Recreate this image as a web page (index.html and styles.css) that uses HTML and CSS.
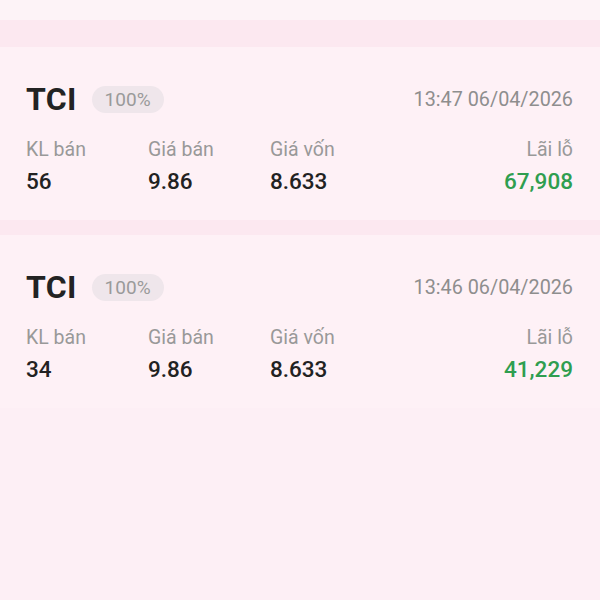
FILE: index.html
```html
<!DOCTYPE html>
<html lang="vi">
<head>
    <meta charset="UTF-8">
    <meta name="viewport" content="width=device-width, initial-scale=1.0">
    <title>Lịch sử bán</title>
    <link rel="stylesheet" href="styles.css">
</head>
<body>
    <div class="top-strip"></div>
    <div class="order-list">
        <div class="order-card">
            <div class="order-head">
                <span class="symbol">TCI</span>
                <span class="ratio">100%</span>
                <span class="time">13:47 06/04/2026</span>
            </div>
            <div class="order-stats">
                <div class="stat">
                    <span class="label">KL bán</span>
                    <span class="value">56</span>
                </div>
                <div class="stat">
                    <span class="label">Giá bán</span>
                    <span class="value">9.86</span>
                </div>
                <div class="stat">
                    <span class="label">Giá vốn</span>
                    <span class="value">8.633</span>
                </div>
                <div class="stat stat-right">
                    <span class="label">Lãi lỗ</span>
                    <span class="value profit">67,908</span>
                </div>
            </div>
        </div>
        <div class="order-card">
            <div class="order-head">
                <span class="symbol">TCI</span>
                <span class="ratio">100%</span>
                <span class="time">13:46 06/04/2026</span>
            </div>
            <div class="order-stats">
                <div class="stat">
                    <span class="label">KL bán</span>
                    <span class="value">34</span>
                </div>
                <div class="stat">
                    <span class="label">Giá bán</span>
                    <span class="value">9.86</span>
                </div>
                <div class="stat">
                    <span class="label">Giá vốn</span>
                    <span class="value">8.633</span>
                </div>
                <div class="stat stat-right">
                    <span class="label">Lãi lỗ</span>
                    <span class="value profit">41,229</span>
                </div>
            </div>
        </div>
    </div>
</body>
</html>
```

FILE: styles.css
```css
body {
    font-family: Roboto, 'Noto Sans', sans-serif;
    background: #fdeff5;
    margin: 0;
    min-height: 100vh;
}
.top-strip {
    height: 20px;
    background: #fdf3f7;
}
.order-list {
    display: flex;
    flex-direction: column;
    gap: 15px;
    padding-top: 27px;
    background: #fce8f0;
}
.order-card {
    background: #fef1f6;
    padding: 30px 27px 25px 26px;
}
.order-head {
    display: flex;
    align-items: center;
    height: 44px;
    margin-bottom: 17px;
}
.symbol {
    font-size: 32px;
    font-weight: bold;
    color: #232323;
    letter-spacing: 0.3px;
}
.ratio {
    margin-left: 15px;
    background: #efe6eb;
    color: #9a9a9a;
    font-size: 19px;
    padding: 3px 13px;
    border-radius: 14px;
    line-height: 21px;
}
.time {
    margin-left: auto;
    color: #8e8e8e;
    font-size: 19.8px;
}
.order-stats {
    display: flex;
}
.stat {
    display: flex;
    flex-direction: column;
    gap: 5px;
    width: 122px;
}
.stat-right {
    margin-left: auto;
    width: auto;
    align-items: flex-end;
}
.label {
    color: #999;
    font-size: 19.5px;
    line-height: 24px;
}
.value {
    color: #222;
    font-size: 22.5px;
    font-weight: 500;
    line-height: 28px;
}
.profit {
    color: #2f9e50;
}
```
